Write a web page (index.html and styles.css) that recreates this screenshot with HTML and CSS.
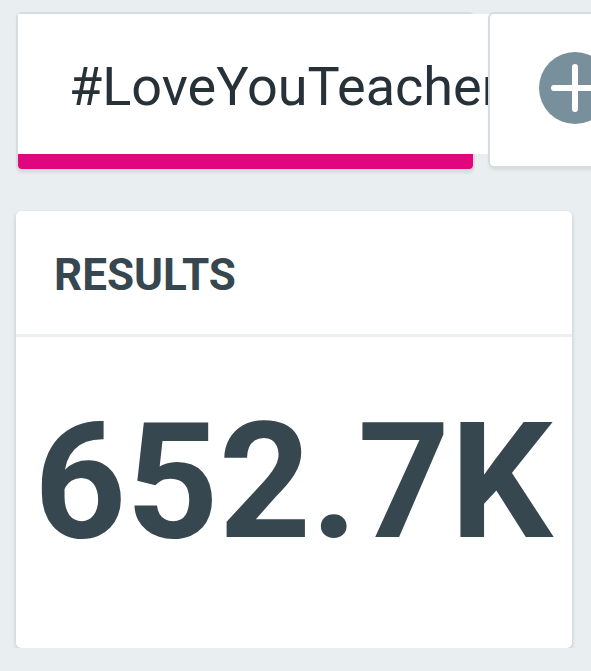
FILE: index.html
```html
<!DOCTYPE html>
<html lang="en">
<head>
  <meta charset="UTF-8" />
  <meta name="viewport" content="width=device-width, initial-scale=1.0" />
  <title>Hashtag results</title>
  <link rel="stylesheet" href="styles.css">
</head>
<body>

  <!-- Hashtag tabs -->
  <div class="tab-strip">
    <div class="tab tab-active">
      <div class="tab-label">#LoveYouTeacher</div>
      <div class="tab-bar"></div>
    </div>
    <div class="tab tab-add">
      <svg class="add-icon" width="72" height="72" viewBox="0 0 72 72">
        <circle cx="36" cy="36" r="36" fill="#78909c"/>
        <path d="M36 15 V57 M15 36 H57" stroke="#fff" stroke-width="6" stroke-linecap="round"/>
      </svg>
    </div>
  </div>

  <!-- Results card -->
  <section class="card">
    <div class="card-head">RESULTS</div>
    <div class="card-value">652.7K</div>
  </section>

</body>
</html>
```

FILE: styles.css
```css
* { margin: 0; padding: 0; box-sizing: border-box; }
body {
  font-family: Roboto, 'Liberation Sans', sans-serif;
  background-color: #e9eef1;
  color: #37474f;
}

/* --- tabs --- */
.tab-strip {
  display: flex;
  align-items: flex-start;
  gap: 17px;
  padding: 14px 0 6px 18px;
  overflow: hidden;
}
.tab {
  flex-shrink: 0;
  background-color: #fff;
  border-radius: 4px;
  box-shadow: 0 0 0 2px #d6dce0, 0 3px 4px rgba(0, 0, 0, 0.12);
}
.tab-active {
  width: 455px;
  height: 155px;
  display: flex;
  flex-direction: column;
}
.tab-label {
  height: 140px;
  margin-right: -17px;
  padding: 46px 0 0 51px;
  background-color: #fff;
  font-size: 54px;
  line-height: 1;
  color: #263238;
  white-space: nowrap;
}
.tab-bar {
  height: 15px;
  background-color: #e0067e;
  border-radius: 0 0 4px 4px;
}
.tab-add {
  position: relative;
  z-index: 1;
  width: 160px;
  height: 152px;
  padding: 38px 0 0 49px;
}
.add-icon { display: block; }

/* --- results card --- */
.card {
  width: 556px;
  margin: 36px 0 0 16px;
  background-color: #fff;
  border-radius: 5px;
  box-shadow: 0 2px 4px rgba(0, 0, 0, 0.18);
}
.card-head {
  padding: 42px 0 37px 38px;
  font-size: 44px;
  line-height: 1;
  font-weight: 700;
  border-bottom: 3px solid #eceff1;
}
.card-value {
  padding: 65px 0 85px 18px;
  font-size: 161px;
  line-height: 1;
  font-weight: 700;
  color: #37474f;
}
```
